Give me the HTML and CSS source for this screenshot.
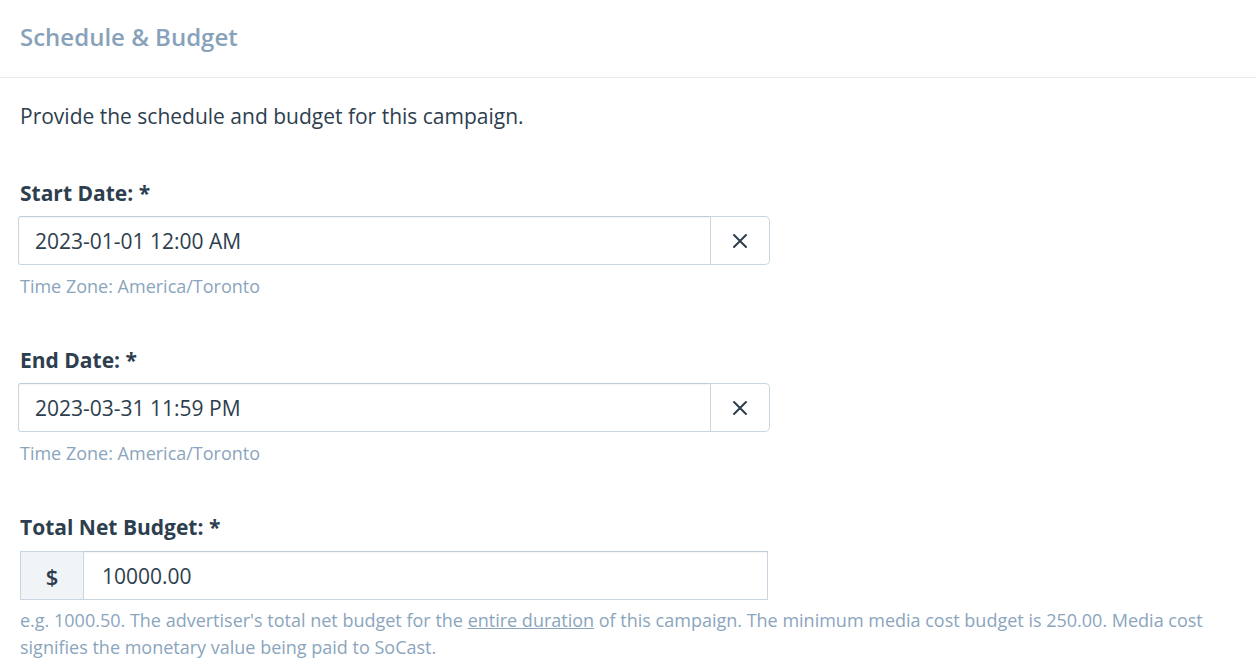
FILE: index.html
```html
<!DOCTYPE html>
<html lang="en">
  <head>
    <meta charset="UTF-8" />
    <meta name="viewport" content="width=device-width, initial-scale=1.0" />
    <title>Schedule &amp; Budget</title>
    <link rel="stylesheet" href="styles.css">
  </head>
  <body>
    <header class="panel-header">
      <h2>Schedule &amp; Budget</h2>
    </header>
    <section class="panel-body">
      <p class="intro">Provide the schedule and budget for this campaign.</p>

      <div class="form-group">
        <label for="startDate">Start Date: *</label>
        <div class="input-group">
          <input type="text" id="startDate" value="2023-01-01 12:00 AM" />
          <button class="clear-btn" type="button" aria-label="Clear">
            <svg width="16" height="16" viewBox="0 0 16 16"><path d="M2 2L14 14M14 2L2 14" stroke="#2d3e4e" stroke-width="2" stroke-linecap="round"/></svg>
          </button>
        </div>
        <div class="hint">Time Zone: America/Toronto</div>
      </div>

      <div class="form-group">
        <label for="endDate">End Date: *</label>
        <div class="input-group">
          <input type="text" id="endDate" value="2023-03-31 11:59 PM" />
          <button class="clear-btn" type="button" aria-label="Clear">
            <svg width="16" height="16" viewBox="0 0 16 16"><path d="M2 2L14 14M14 2L2 14" stroke="#2d3e4e" stroke-width="2" stroke-linecap="round"/></svg>
          </button>
        </div>
        <div class="hint">Time Zone: America/Toronto</div>
      </div>

      <div class="form-group last">
        <label for="budget">Total Net Budget: *</label>
        <div class="input-group budget">
          <span class="addon">$</span>
          <input type="text" id="budget" value="10000.00" />
        </div>
        <div class="hint">
          e.g. 1000.50. The advertiser's total net budget for the <a href="#">entire duration</a> of this campaign. The minimum media cost budget is 250.00. Media cost signifies the monetary value being paid to SoCast.
        </div>
      </div>
    </section>
  </body>
</html>
```

FILE: styles.css
```css
body {
  margin: 0;
  font-family: "Open Sans", sans-serif;
  color: #2d3e4e;
  background: #fff;
}

.panel-header {
  padding: 19px 20px 22px;
  border-bottom: 1px solid #e6eaee;
}

.panel-header h2 {
  margin: 0;
  font-size: 24px;
  line-height: 36px;
  font-weight: 600;
  color: #87a2ba;
}

.panel-body {
  padding: 23px 20px 0;
}

.intro {
  margin: 0 0 46px;
  font-size: 21px;
  line-height: 31px;
}

.form-group {
  margin-bottom: 45px;
}

.form-group.last {
  margin-bottom: 0;
}

.form-group label {
  display: block;
  font-size: 21px;
  line-height: 31px;
  font-weight: 700;
  margin-bottom: 7px;
}

.form-group.last label {
  margin-bottom: 8px;
}

.input-group {
  display: flex;
  width: 752px;
  margin-left: -2px;
  height: 49px;
}

.input-group input {
  flex: 1;
  min-width: 0;
  box-sizing: border-box;
  height: 49px;
  border: 1px solid #c9d5e0;
  border-top-color: #c0ccd7;
  border-radius: 3px 0 0 3px;
  padding: 0 16px;
  font-family: inherit;
  font-size: 21px;
  color: #2d3e4e;
  box-shadow: inset 0 1px 1px rgba(0, 0, 0, 0.04);
  outline: none;
}

.clear-btn {
  width: 59px;
  height: 49px;
  box-sizing: border-box;
  border: 1px solid #c9d5e0;
  border-left: none;
  border-radius: 0 5px 5px 0;
  background: #fff;
  display: flex;
  align-items: center;
  justify-content: center;
  padding: 0;
  cursor: pointer;
}

.input-group.budget {
  width: 748px;
  margin-left: 0;
}

.addon {
  width: 63px;
  box-sizing: border-box;
  display: flex;
  align-items: center;
  justify-content: center;
  background: #f1f4f7;
  border: 1px solid #c9d5e0;
  border-right: none;
  font-size: 22px;
  font-weight: 600;
}

.budget input {
  border-radius: 0;
  padding-left: 18px;
}

.hint {
  margin-top: 8px;
  font-size: 18px;
  line-height: 27px;
  color: #8ba5bd;
}

.form-group.last .hint {
  margin-top: 7px;
}

.hint a {
  color: #8ba5bd;
}
```
